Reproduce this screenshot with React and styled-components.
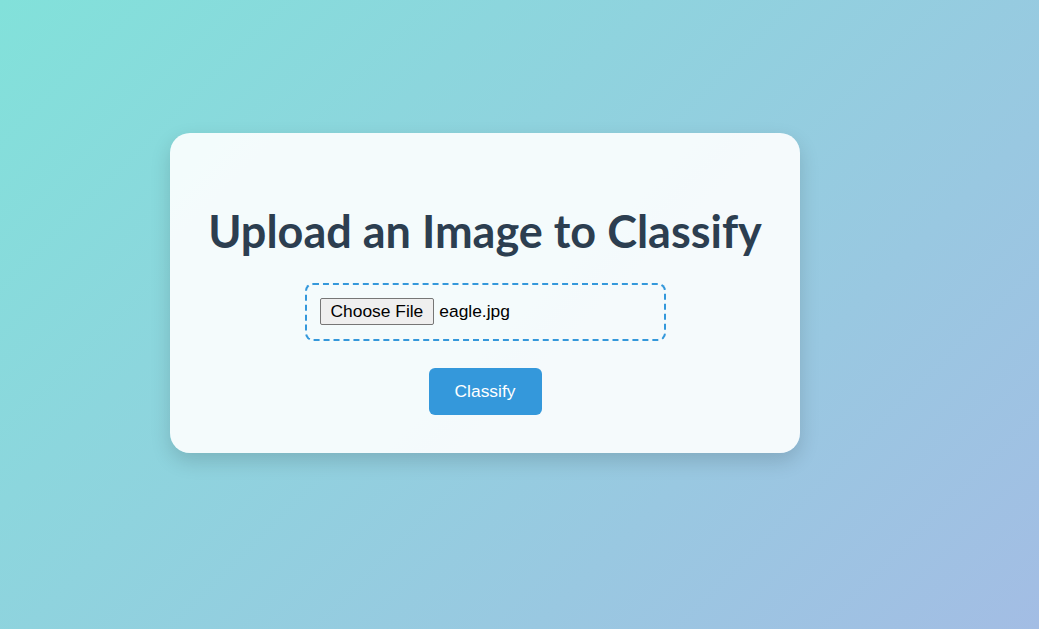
import styled, { createGlobalStyle } from 'styled-components';

const GlobalStyle = createGlobalStyle`
  html, body {
    margin: 0;
    padding: 0;
    height: 100%;
  }
  body {
    font-family: "Liberation Sans", Arial, sans-serif;
    background: linear-gradient(135deg, #82e1da 0%, #a3bde4 100%);
    background-attachment: fixed;
    min-height: 100vh;
  }
  #root {
    min-height: 100vh;
  }
`

const Page = styled.div`
  min-height: 100vh;
  box-sizing: border-box;
  padding: 133px 0 0 170px;
  display: flex;
  align-items: flex-start;
`

const Card = styled.div`
  width: 630px;
  height: 320px;
  box-sizing: border-box;
  padding: 71px 20px 0;
  background-color: rgba(255, 255, 255, 0.9);
  border-radius: 20px;
  box-shadow: 0 8px 20px rgba(0, 0, 0, 0.15);
  display: flex;
  flex-direction: column;
  align-items: center;
`

const Title = styled.h1`
  margin: 0 0 25px;
  font-family: Lato, "Open Sans", sans-serif;
  font-size: 45px;
  line-height: 54px;
  font-weight: 700;
  color: #2c3e50;
  white-space: nowrap;
`

const DropZone = styled.div`
  width: 361px;
  height: 58px;
  box-sizing: border-box;
  padding: 13px;
  border: 2px dashed #3498db;
  border-radius: 8px;
  display: flex;
  align-items: flex-start;
  gap: 5px;
  font-size: 17.4px;
  color: #000;
`

const PickButton = styled.span`
  box-sizing: border-box;
  height: 27px;
  padding: 0 10px;
  display: inline-flex;
  align-items: center;
  background: #efefef;
  border: 1px solid #767676;
  border-radius: 2px;
  color: #000;
`

const FileName = styled.span`
  line-height: 27px;
`

const ClassifyButton = styled.button`
  margin-top: 27px;
  width: 113px;
  height: 47px;
  border: none;
  border-radius: 6px;
  background-color: #3498db;
  color: #fff;
  font-family: "Liberation Sans", Arial, sans-serif;
  font-size: 17.4px;
  cursor: pointer;
`

export default function App() {
  return (
    <>
      <GlobalStyle />
      <Page>
        <Card>
          <Title>Upload an Image to Classify</Title>
          <DropZone>
            <PickButton>Choose File</PickButton>
            <FileName>eagle.jpg</FileName>
          </DropZone>
          <ClassifyButton>Classify</ClassifyButton>
        </Card>
      </Page>
    </>
  )
}
